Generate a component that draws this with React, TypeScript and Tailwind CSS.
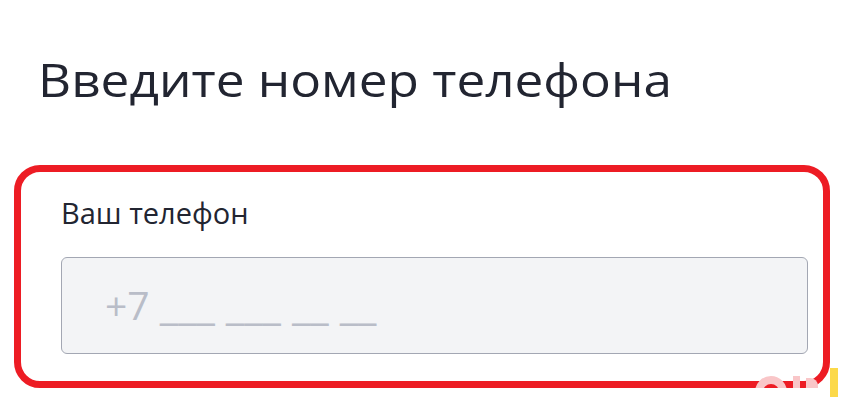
export default function App() {
  return (
    <div
      className="relative w-[862px] h-[408px] overflow-hidden bg-white"
      style={{ fontFamily: '"Open Sans", "Noto Sans", sans-serif' }}
    >
      <h1 className="mt-[57px] pl-[38px] text-[45px] leading-[45px] font-normal text-[#222531]">
        <span className="inline-block origin-left scale-x-[1.14]">Введите номер телефона</span>
      </h1>

      {/* Блок с полем телефона */}
      <div className="mt-[63px] ml-[14px] w-[816px] h-[223px] rounded-[26px] border-[7px] border-[#ed1c24] pl-[40px] pt-[26px]">
        <label className="block text-[29px] leading-[29px] text-[#222531]">
          Ваш телефон
        </label>
        <div className="mt-[30px] w-[747px] h-[97px] rounded-[6px] border border-[#a3a7b3] bg-[#f3f4f6] flex items-center pl-[43px]">
          <span className="text-[39px] leading-none text-[#b9bdc8] pb-[4px] whitespace-pre">
            +7 <span className="text-[42px]">___ ___ __ __</span>
          </span>
        </div>
      </div>

      {/* водяной знак */}
      <div className="absolute left-[755px] top-[376px] flex items-start gap-[6px]">
        <div className="w-[32px] h-[12px] overflow-hidden">
          <div className="w-[32px] h-[32px] rounded-full border-[8px] border-[#f9c6c8]" />
        </div>
        <div className="w-[7px] h-[12px] bg-[#f9c6c8]" />
        <div className="w-[12px] h-[10px] mt-[2px] rounded-tr-[8px] bg-[#f9c6c8]" />
      </div>
      <div className="absolute left-[830px] top-[368px] w-[8px] h-[29px] bg-[#fcd94a]" />
    </div>
  );
}
